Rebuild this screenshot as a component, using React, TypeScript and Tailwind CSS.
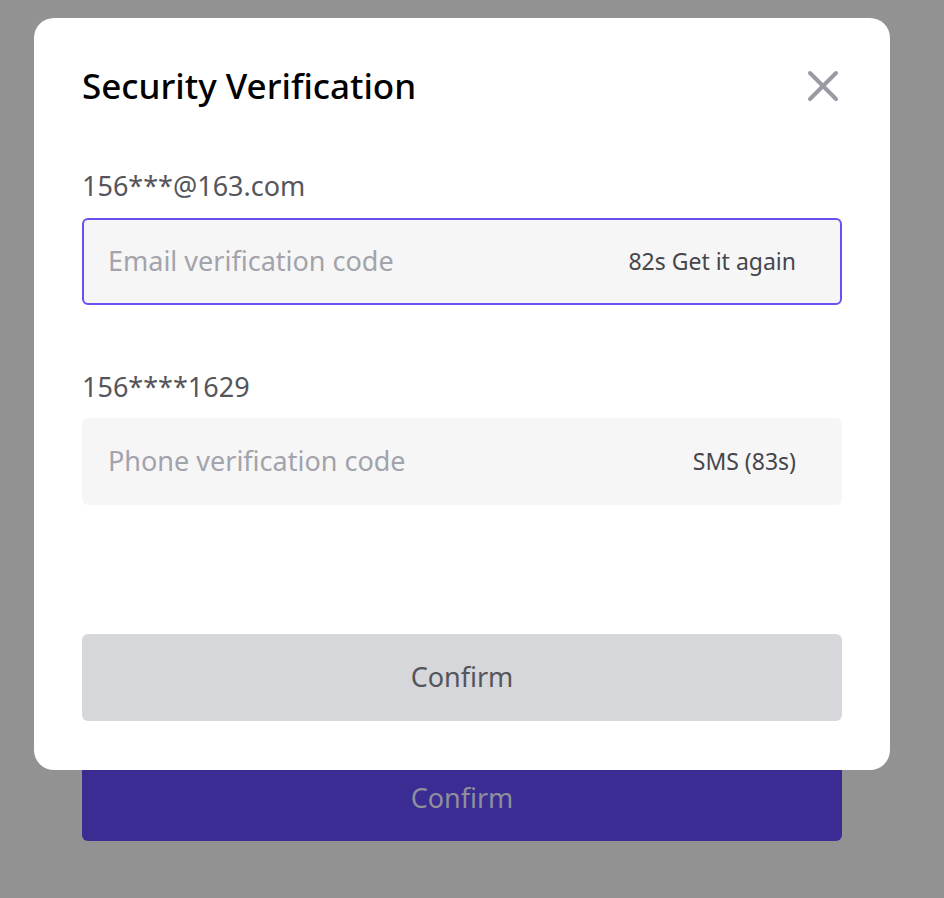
const font = { fontFamily: '"Noto Sans", "Liberation Sans", sans-serif' };

function CodeField({ placeholder, action, active }: { placeholder: string; action: string; active?: boolean }) {
  return (
    <div
      className={`flex h-[87px] items-center justify-between rounded-md bg-[#f6f6f6] px-[24px] ${
        active ? "border-2 border-[#6a50ee]" : "border-2 border-transparent"
      }`}
    >
      <span className="text-[27px] text-[#a3a3ab]">{placeholder}</span>
      <span className="pr-[20px] text-[23px] text-[#46464c]">{action}</span>
    </div>
  );
}

function CloseIcon() {
  return (
    <svg width="32" height="32" viewBox="0 0 32 32" className="mr-[3px] text-[#9a9aa2]">
      <path d="M3 3 L29 29 M29 3 L3 29" stroke="currentColor" strokeWidth="4" strokeLinecap="round" fill="none" />
    </svg>
  );
}

export default function App() {
  return (
    <div className="relative h-[898px] w-[944px] overflow-hidden bg-[#929292]" style={font}>
      {/* page under the overlay */}
      <div className="flex flex-col pl-[82px] pt-[755px]">
        <button className="flex h-[86px] w-[760px] items-center justify-center rounded-md bg-[#3a2c93] text-[27px] text-[#8f8f9c]">
          Confirm
        </button>
      </div>

      {/* modal */}
      <div className="absolute left-[34px] top-[18px] flex h-[752px] w-[856px] flex-col rounded-[20px] bg-white px-[48px] pt-[44px]">
        <div className="flex items-center justify-between">
          <h1 className="text-[35px] font-medium leading-[48px] text-black">Security Verification</h1>
          <CloseIcon />
        </div>

        <p className="mt-[58px] text-[27px] leading-[36px] text-[#55555b]">156***@163.com</p>
        <div className="mt-[14px]">
          <CodeField placeholder="Email verification code" action="82s Get it again" active />
        </div>

        <p className="mt-[64px] text-[27px] leading-[36px] text-[#55555b]">156****1629</p>
        <div className="mt-[13px]">
          <CodeField placeholder="Phone verification code" action="SMS (83s)" />
        </div>

        <button className="mt-[129px] flex h-[87px] items-center justify-center rounded-md bg-[#d6d7db] text-[27px] text-[#55555b]">
          Confirm
        </button>
      </div>
    </div>
  );
}
